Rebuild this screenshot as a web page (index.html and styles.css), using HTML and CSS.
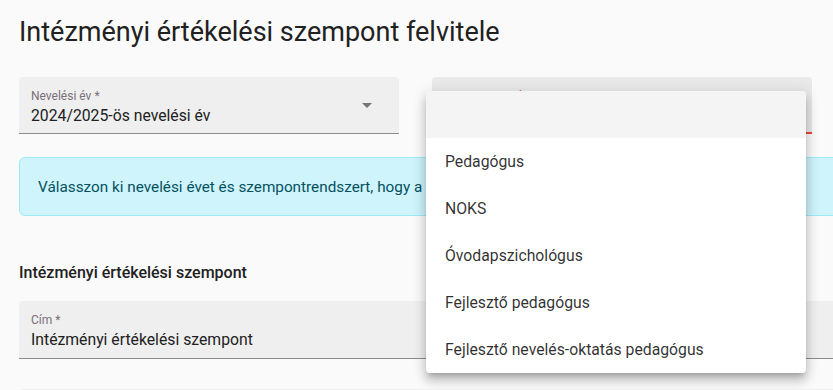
FILE: index.html
```html
<!DOCTYPE html>
<html lang="hu">
<head>
<meta charset="utf-8">
<title>Intézményi értékelési szempont felvitele</title>
<link rel="stylesheet" href="styles.css">
</head>
<body>
<div class="page">
  <h1 class="title">Intézményi értékelési szempont felvitele</h1>

  <div class="select-row">
    <div class="field">
      <div class="field-text">
        <span class="field-label">Nevelési év *</span>
        <span class="field-value">2024/2025-ös nevelési év</span>
      </div>
      <span class="arrow"></span>
    </div>
    <div class="field field-focused">
      <div class="field-text">
        <span class="field-label label-error">Szempontrendszer *</span>
        <span class="field-value">&nbsp;</span>
      </div>
      <span class="arrow"></span>
      <div class="menu">
        <div class="option option-active">&nbsp;</div>
        <div class="option">Pedagógus</div>
        <div class="option">NOKS</div>
        <div class="option">Óvodapszichológus</div>
        <div class="option">Fejlesztő pedagógus</div>
        <div class="option">Fejlesztő nevelés-oktatás pedagógus</div>
      </div>
    </div>
    <div class="field"></div>
  </div>

  <div class="alert">Válasszon ki nevelési évet és szempontrendszert, hogy a szempontokat meg tudja adni.</div>

  <h2 class="section-title">Intézményi értékelési szempont</h2>

  <div class="field field-wide">
    <div class="field-text">
      <span class="field-label">Cím *</span>
      <span class="field-value">Intézményi értékelési szempont</span>
    </div>
  </div>

  <div class="field field-wide field-next"></div>
</div>
</body>
</html>
```

FILE: styles.css
```css
html, body {
  margin: 0;
  padding: 0;
  overflow: hidden;
  background: #fafafa;
}

body {
  font-family: Roboto, "Noto Sans", Arial, sans-serif;
  color: #212121;
}

.page {
  width: 1300px;
  padding: 16px 19px 0;
  display: flex;
  flex-direction: column;
}

.title {
  margin: 0 0 29px;
  font-size: 27px;
  line-height: 32px;
  font-weight: 400;
  color: #212121;
}

.select-row {
  display: grid;
  grid-template-columns: 380px 380px 380px;
  column-gap: 33px;
}

.field {
  position: relative;
  height: 56px;
  background: #efefef;
  border-radius: 4px 4px 0 0;
  border-bottom: 1px solid #8c8c8c;
  display: flex;
  align-items: flex-start;
  box-sizing: content-box;
}

.field-text {
  display: flex;
  flex-direction: column;
  padding: 12px 12px 0;
  flex: 1;
}

.field-label {
  font-size: 12px;
  line-height: 15px;
  color: #7a6f7a;
}

.label-error {
  color: #f44336;
}

.field-value {
  font-size: 15.75px;
  line-height: 24px;
  color: #212121;
}

.arrow {
  width: 0;
  height: 0;
  border-left: 5px solid transparent;
  border-right: 5px solid transparent;
  border-top: 5px solid #757575;
  margin: 26px 27px 0 0;
}

.field-focused {
  background: #e9e9e9;
  border-bottom: 2px solid #f44336;
  height: 55px;
}

.menu {
  position: absolute;
  left: -6px;
  top: 14px;
  width: 380px;
  background: #fff;
  border-radius: 4px;
  overflow: hidden;
  z-index: 10;
  box-shadow: 0 5px 5px -3px rgba(0,0,0,.2), 0 8px 10px 1px rgba(0,0,0,.14), 0 3px 14px 2px rgba(0,0,0,.12);
}

.option {
  height: 47px;
  display: flex;
  align-items: center;
  padding: 0 19px;
  font-size: 15.75px;
  color: rgba(0,0,0,.82);
}

.option-active {
  background: #f4f4f4;
}

.alert {
  margin-top: 23px;
  width: 1240px;
  box-sizing: border-box;
  height: 59px;
  display: flex;
  align-items: center;
  padding: 0 18px;
  background: #cff4fc;
  border: 1px solid #9eeaf9;
  border-radius: 6px;
  color: #055160;
  font-size: 15.3px;
  white-space: nowrap;
}

.section-title {
  margin: 45px 0 16px;
  font-size: 16px;
  line-height: 24px;
  font-weight: 500;
  color: #212121;
}

.field-wide {
  width: 1240px;
  height: 57px;
}

.field-next {
  margin-top: 30px;
}
```
